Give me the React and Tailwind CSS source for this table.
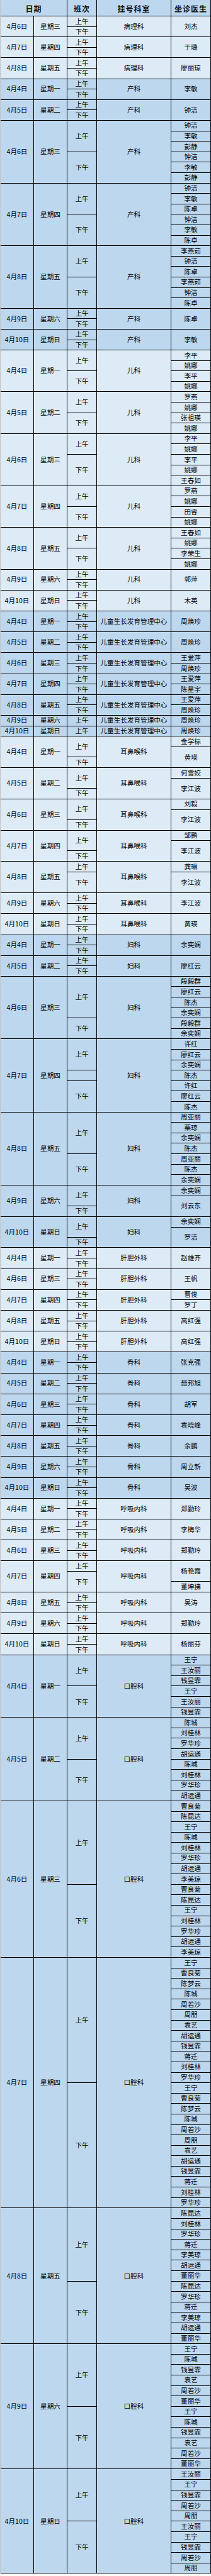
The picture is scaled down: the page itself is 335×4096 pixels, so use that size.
import React from 'react';

const L = 'bg-[#DDEBF7]';
const D = 'bg-[#BDD7EE]';
const U = 16.6;

const ones = (arr) => arr.map((n) => [n, 1]);
const s11 = [['上午', 1], ['下午', 1]];
const s22 = [['上午', 2], ['下午', 2]];
const s33 = [['上午', 3], ['下午', 3]];
const s44 = [['上午', 4], ['下午', 4]];
const s55 = [['上午', 5], ['下午', 5]];
const s66 = [['上午', 6], ['下午', 6]];
const s21 = [['上午', 2], ['下午', 1]];
const s12 = [['上午', 1], ['下午', 2]];

const C = '儿童生长发育管理中心';
const E = '耳鼻喉科';
const F = '妇科';
const G = '肝胆外科';
const H = '呼吸内科';
const K = '口腔科';

const k7 = ['王宁', '曹良菊', '陈梦云', '陈城', '周若沙', '周朋', '袁艺', '胡运通', '钱昱霏', '蒋迁', '刘桂林', '罗华珍'];
const k9 = ['王宁', '陈城', '钱昱霏', '袁艺', '周若沙', '董丽华'];
const k10 = ['王汝丽', '王宁', '钱昱霏', '周若沙', '周朋'];

const blocks = [
  ['4月6日', '星期三', s11, '病理科', [['刘杰', 2]], L],
  ['4月7日', '星期四', s11, '病理科', [['于璐', 2]], L],
  ['4月8日', '星期五', s11, '病理科', [['廖丽琼', 2]], L],

  ['4月4日', '星期一', s11, '产科', [['李敏', 2]], D],
  ['4月5日', '星期二', s11, '产科', [['钟洁', 2]], D],
  ['4月6日', '星期三', s33, '产科', ones(['钟洁', '李敏', '彭静', '钟洁', '李敏', '彭静']), D],
  ['4月7日', '星期四', s33, '产科', ones(['钟洁', '李敏', '陈卓', '钟洁', '李敏', '陈卓']), D],
  ['4月8日', '星期五', s33, '产科', ones(['李燕茹', '钟洁', '陈卓', '李燕茹', '钟洁', '陈卓']), D],
  ['4月9日', '星期六', s11, '产科', [['陈卓', 2]], D],
  ['4月10日', '星期日', s11, '产科', [['李敏', 2]], D],

  ['4月4日', '星期一', s22, '儿科', ones(['李平', '姚娜', '李平', '姚娜']), L],
  ['4月5日', '星期二', s22, '儿科', ones(['罗燕', '姚娜', '张祖瑛', '姚娜']), L],
  ['4月6日', '星期三', [['上午', 2], ['下午', 3]], '儿科', ones(['李平', '姚娜', '李平', '姚娜', '王春如']), L],
  ['4月7日', '星期四', s22, '儿科', ones(['罗燕', '姚娜', '田睿', '姚娜']), L],
  ['4月8日', '星期五', s22, '儿科', ones(['王春如', '姚娜', '李荣生', '姚娜']), L],
  ['4月9日', '星期六', s11, '儿科', [['郭萍', 2]], L],
  ['4月10日', '星期日', s11, '儿科', [['木英', 2]], L],

  ['4月4日', '星期一', s11, C, [['周焕珍', 2]], D],
  ['4月5日', '星期二', s11, C, [['周焕珍', 2]], D],
  ['4月6日', '星期三', s11, C, ones(['王爱萍', '周焕珍']), D],
  ['4月7日', '星期四', s11, C, ones(['王爱萍', '陈星宇']), D],
  ['4月8日', '星期五', s11, C, ones(['王爱萍', '周焕珍']), D],
  ['4月9日', '星期六', [['上午', 1]], C, [['周焕珍', 1]], D],
  ['4月10日', '星期日', [['上午', 1]], C, [['周焕珍', 1]], D],

  ['4月4日', '星期一', s21, E, [['金学标', 1], ['黄瑛', 2]], L],
  ['4月5日', '星期二', s21, E, [['何雪姣', 1], ['李江波', 2]], L],
  ['4月6日', '星期三', s21, E, [['刘毅', 1], ['李江波', 2]], L],
  ['4月7日', '星期四', s21, E, [['邹鹏', 1], ['李江波', 2]], L],
  ['4月8日', '星期五', s12, E, [['龚琳', 1], ['李江波', 2]], L],
  ['4月9日', '星期六', s11, E, [['李江波', 2]], L],
  ['4月10日', '星期日', s11, E, [['黄瑛', 2]], L],

  ['4月4日', '星期一', s11, F, [['余奕娴', 2]], D],
  ['4月5日', '星期二', s11, F, [['廖红云', 2]], D],
  ['4月6日', '星期三', [['上午', 4], ['下午', 2]], F, ones(['段毅群', '廖红云', '陈杰', '余奕娴', '段毅群', '余奕娴']), D],
  ['4月7日', '星期四', [['上午', 3], ['', 1], ['下午', 3]], F, ones(['许红', '廖红云', '余奕娴', '陈杰', '许红', '廖红云', '陈杰']), D],
  ['4月8日', '星期五', [['上午', 4], ['下午', 3]], F, ones(['周亚丽', '栗琼', '余奕娴', '陈杰', '周亚丽', '陈杰', '余奕娴']), D],
  ['4月9日', '星期六', s21, F, [['余奕娴', 1], ['刘云东', 2]], D],
  ['4月10日', '星期日', s21, F, [['余奕娴', 1], ['罗洁', 2]], D],

  ['4月4日', '星期一', s11, G, [['赵雄齐', 2]], L],
  ['4月6日', '星期三', s11, G, [['王帆', 2]], L],
  ['4月7日', '星期四', s11, G, ones(['曹俊', '罗丁']), L],
  ['4月8日', '星期五', s11, G, [['高红强', 2]], L],
  ['4月10日', '星期日', s11, G, [['高红强', 2]], L],

  ['4月4日', '星期一', s11, '骨科', [['张克强', 2]], D],
  ['4月5日', '星期二', s11, '骨科', [['聂邦旭', 2]], D],
  ['4月6日', '星期三', s11, '骨科', [['胡军', 2]], D],
  ['4月7日', '星期四', s11, '骨科', [['袁晓峰', 2]], D],
  ['4月8日', '星期五', s11, '骨科', [['余鹏', 2]], D],
  ['4月9日', '星期六', s11, '骨科', [['周立新', 2]], D],
  ['4月10日', '星期日', s11, '骨科', [['吴波', 2]], D],

  ['4月4日', '星期一', s11, H, [['郑勤玲', 2]], L],
  ['4月5日', '星期二', s11, H, [['李梅华', 2]], L],
  ['4月6日', '星期三', s11, H, [['郑勤玲', 2]], L],
  ['4月7日', '星期四', s12, H, [['杨艳霞', 2], ['董坤拂', 1]], L],
  ['4月8日', '星期五', s11, H, [['吴涛', 2]], L],
  ['4月9日', '星期六', s11, H, [['郑勤玲', 2]], L],
  ['4月10日', '星期日', s11, H, [['杨丽芬', 2]], L],

  ['4月4日', '星期一', s33, K, ones(['王宁', '王汝丽', '钱昱霏', '王宁', '王汝丽', '钱昱霏']), D],
  ['4月5日', '星期二', s44, K, ones(['陈城', '刘桂林', '罗华珍', '胡运通', '陈城', '刘桂林', '罗华珍', '胡运通']), D],
  ['4月6日', '星期三', [['上午', 8], ['下午', 7]], K, ones(['曹良菊', '陈昆达', '王宁', '陈城', '刘桂林', '罗华珍', '胡运通', '李美琼', '曹良菊', '陈昆达', '王宁', '刘桂林', '罗华珍', '胡运通', '李美琼']), D],
  ['4月7日', '星期四', [['上午', 12], ['下午', 12]], K, ones([...k7, ...k7]), D],
  ['4月8日', '星期五', [['上午', 7], ['下午', 6]], K, ones(['陈昆达', '刘桂林', '罗华珍', '蒋迁', '李美琼', '胡运通', '董丽华', '陈昆达', '罗华珍', '蒋迁', '李美琼', '胡运通', '董丽华']), D],
  ['4月9日', '星期六', s66, K, ones([...k9, ...k9]), D],
  ['4月10日', '星期日', s55, K, ones([...k10, ...k10]), D],
];

function SubCol({ items, className }) {
  return (
    <div className={`flex flex-col ${className}`}>
      {items.map(([label, u], i) => (
        <div
          key={i}
          className="basis-0 min-h-0 flex items-center justify-center border-b border-black last:border-b-0 whitespace-nowrap"
          style={{ flexGrow: u }}
        >
          {label}
        </div>
      ))}
    </div>
  );
}

function Block({ b }) {
  const [date, wd, shifts, dept, docs, bg] = b;
  const units = docs.reduce((a, [, u]) => a + u, 0);
  return (
    <div className={`flex border-b border-black ${bg}`} style={{ height: units * U }}>
      <div className="w-[53px] shrink-0 border-r border-black flex items-center justify-center whitespace-nowrap">{date}</div>
      <div className="w-[53px] shrink-0 border-r border-black flex items-center justify-center whitespace-nowrap">{wd}</div>
      <SubCol items={shifts} className="w-[47px] shrink-0 border-r border-black" />
      <div className="w-[118px] shrink-0 border-r border-black flex items-center justify-center whitespace-nowrap">{dept}</div>
      <SubCol items={docs} className="w-[63px] shrink-0 border-r border-black" />
    </div>
  );
}

export default function App() {
  return (
    <div
      className="w-[335px] bg-white text-black text-[10.6px] leading-none"
      style={{ fontFamily: '"Noto Sans CJK SC", "Noto Sans", sans-serif' }}
    >
      <div className="border-l border-[#c4c4c4]">
        <div className="flex h-[26px] border-b border-black bg-[#BDD7EE] text-[12px] font-bold tracking-[1px] text-[#111]">
          <div className="w-[106px] shrink-0 border-r border-black flex items-center justify-center pt-[2px]">日期</div>
          <div className="w-[47px] shrink-0 border-r border-black flex items-center justify-center pt-[2px]">班次</div>
          <div className="w-[118px] shrink-0 border-r border-black flex items-center justify-center pt-[2px]">挂号科室</div>
          <div className="w-[63px] shrink-0 border-r border-black flex items-center justify-center pt-[2px]">坐诊医生</div>
        </div>
        {blocks.map((b, i) => (
          <Block key={i} b={b} />
        ))}
      </div>
    </div>
  );
}
